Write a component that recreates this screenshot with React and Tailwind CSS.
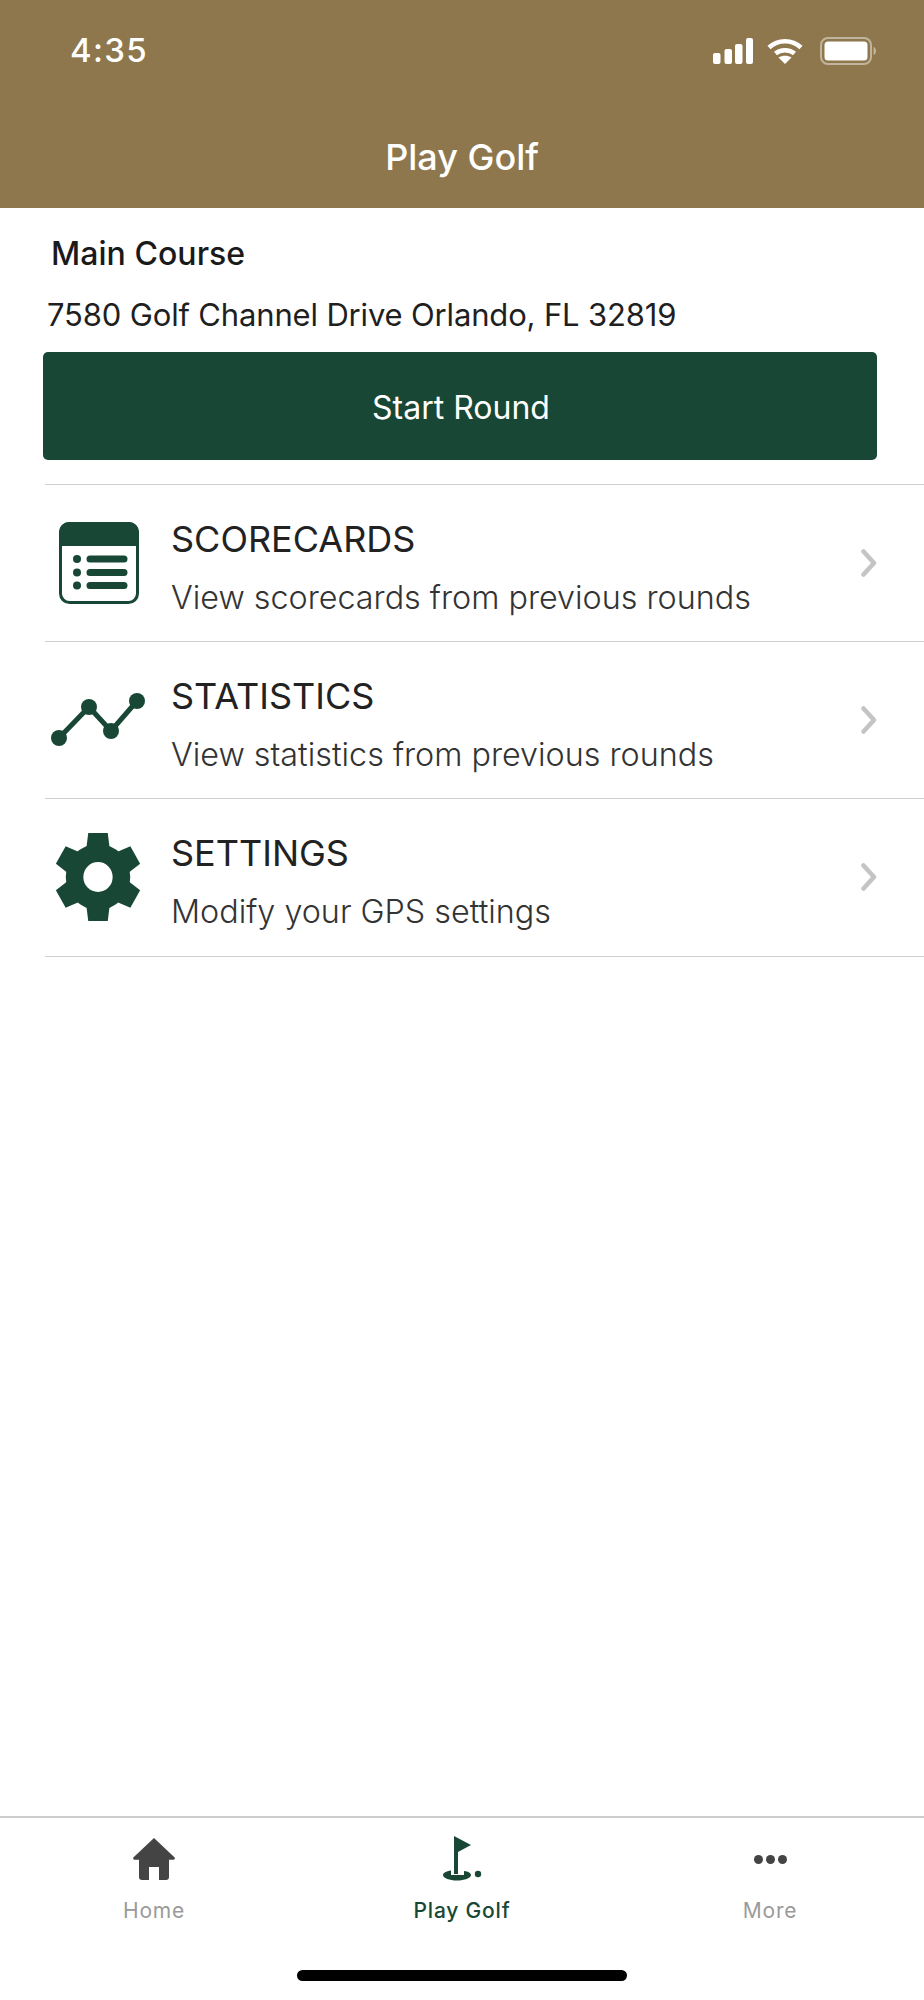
const GREEN = "#184835";

function ScorecardIcon() {
  return (
    <svg width="80" height="82" viewBox="0 0 80 82" fill="none">
      <rect x="1.5" y="1.5" width="77" height="79" rx="9" stroke={GREEN} strokeWidth="3" />
      <path d="M0 24V10a10 10 0 0 1 10-10h60a10 10 0 0 1 10 10v14z" fill={GREEN} />
      <circle cx="18" cy="37" r="4" fill={GREEN} />
      <circle cx="18" cy="50.5" r="4" fill={GREEN} />
      <circle cx="18" cy="63.5" r="4" fill={GREEN} />
      <path d="M31 37h34M31 50.5h34M31 63.5h34" stroke={GREEN} strokeWidth="7" strokeLinecap="round" />
    </svg>
  );
}

function ChartIcon() {
  return (
    <svg width="98" height="54" viewBox="0 0 98 54" fill="none">
      <path d="M9 45 39 14 61 38 87 8" stroke={GREEN} strokeWidth="5" />
      <circle cx="9" cy="45" r="8" fill={GREEN} />
      <circle cx="39" cy="14" r="8" fill={GREEN} />
      <circle cx="61" cy="38" r="8" fill={GREEN} />
      <circle cx="87" cy="8" r="8" fill={GREEN} />
    </svg>
  );
}

function GearIcon() {
  return (
    <svg width="86" height="88" viewBox="0 0 88 88" preserveAspectRatio="none" className="mr-[3px]">
      <circle cx="44" cy="44" r="33" fill={GREEN} />
      {[0, 60, 120, 180, 240, 300].map((deg) => (
        <polygon key={deg} points="34,0 54,0 56,16 32,16" fill={GREEN} transform={`rotate(${deg} 44 44)`} />
      ))}
      <circle cx="44" cy="44" r="15" fill="#fff" />
    </svg>
  );
}

function HomeIcon() {
  return (
    <svg width="42" height="42" viewBox="0 0 42 42" fill="#444">
      <path d="M21 0 41.400 19.200a1.500 1.500 0 0 1-1 2.600H36V39a3 3 0 0 1-3 3h-7V29H16v13H9a3 3 0 0 1-3-3V21.800H1.600a1.500 1.500 0 0 1-1-2.600z" />
    </svg>
  );
}

function FlagIcon() {
  return (
    <svg width="40" height="46" viewBox="0 0 40 46" fill={GREEN}>
      <path d="M12 0 29 9 16 16v22h-4z" />
      <path d="M9 34.500v4.500h13v-4.100c4.500.5 7 2 7 4.100 0 3-6.500 5.500-14 5.500S1 42 1 39c0-2 3-3.700 8-4.500z" />
      <circle cx="36" cy="38" r="3.200" />
    </svg>
  );
}

function SignalIcon() {
  return (
    <svg width="40" height="26" viewBox="0 0 40 26" fill="#fff">
      <rect x="0" y="15" width="7.500" height="11" rx="2" />
      <rect x="11.500" y="11" width="7.500" height="15" rx="2" />
      <rect x="22" y="6" width="7.500" height="20" rx="2" />
      <rect x="33" y="0" width="7" height="26" rx="2" />
    </svg>
  );
}

function WifiIcon() {
  return (
    <svg width="36" height="26" viewBox="0 0 36 26" fill="none">
      <path d="M2 9.500C11 1 25 1 34 9.500" stroke="#fff" strokeWidth="4.500" />
      <path d="M8.500 15.500C13.500 11 22.500 11 27.500 15.500" stroke="#fff" strokeWidth="4.500" />
      <path d="M11.500 19.500C15 17.200 21 17.200 24.500 19.500L18 26z" fill="#fff" />
    </svg>
  );
}

function BatteryIcon() {
  return (
    <svg width="56" height="28" viewBox="0 0 56 28" fill="none" className="ml-[3px]">
      <rect x="1" y="1" width="50" height="26" rx="7" stroke="#fff" strokeOpacity="0.45" strokeWidth="2" />
      <rect x="4.500" y="4.500" width="43" height="19" rx="3.500" fill="#fff" />
      <path d="M53.500 10c1.700.6 2.500 2.200 2.500 4s-.8 3.400-2.500 4z" fill="#fff" fillOpacity="0.45" />
    </svg>
  );
}

function Chevron() {
  return (
    <svg width="16" height="28" viewBox="0 0 16 28" fill="none">
      <path d="M2.500 2.500 13 14 2.500 25.500" stroke="#c4c4c4" strokeWidth="4.500" strokeLinecap="round" strokeLinejoin="round" />
    </svg>
  );
}

const rows = [
  { title: "SCORECARDS", sub: "View scorecards from previous rounds", icon: <ScorecardIcon /> },
  { title: "STATISTICS", sub: "View statistics from previous rounds", icon: <ChartIcon /> },
  { title: "SETTINGS", sub: "Modify your GPS settings", icon: <GearIcon /> },
];

function MenuRow({ title, sub, icon }) {
  return (
    <div className="flex h-[157.200px] items-center border-b border-[#cfcfcf] pr-[47px]">
      <div className="flex w-[108px] shrink-0 justify-center">{icon}</div>
      <div className="ml-[18px] flex-1">
        <p className="mt-[10px] text-[36px] leading-[40px] text-[#222]">{title}</p>
        <p className="mt-[19px] text-[32.300px] leading-[40px] font-light text-[#333]">{sub}</p>
      </div>
      <Chevron />
    </div>
  );
}

function TabItem({ label, active, icon }) {
  return (
    <div className="flex flex-1 flex-col items-center">
      <div className="flex h-[46px] items-center justify-center">{icon}</div>
      <span
        className={`mt-[16px] text-[21px] leading-[26px] tracking-[0.8px] ${
          active ? "font-medium text-[#184835]" : "text-[#9a9a9a]"
        }`}
      >
        {label}
      </span>
    </div>
  );
}

export default function App() {
  return (
    <div className="flex h-[2000px] w-[924px] flex-col bg-white font-['Inter',sans-serif]">
      {/* header */}
      <div className="h-[208px] bg-[#8e774c] text-white">
        <div className="flex h-[101px] items-center justify-between pr-[48px] pl-[70px]">
          <span className="text-[33px] font-medium tracking-[1.3px]">4:35</span>
          <div className="flex items-center gap-[14px]">
            <SignalIcon />
            <WifiIcon />
            <BatteryIcon />
          </div>
        </div>
        <h1 className="mt-[34px] text-center text-[36px] leading-[44px] font-medium">Play Golf</h1>
      </div>

      <div className="flex-1">
        <p className="mt-[28px] ml-[51px] text-[32px] leading-[36px] font-medium tracking-[0.05px] text-[#1a1a1a]">
          Main Course
        </p>
        <p className="mt-[24px] ml-[47px] text-[31px] leading-[38px] tracking-[-0.16px] text-[#1f1f1f]">
          7580 Golf Channel Drive Orlando, FL 32819
        </p>
        <button className="mx-[43px] mt-[18px] flex h-[108px] w-[834px] items-center justify-center rounded-[5px] bg-[#184835] pt-[3px] pl-[2px] text-[32px] text-white">
          Start Round
        </button>
        <div className="mt-[24px] ml-[45px] border-t border-[#cfcfcf]">
          {rows.map((row) => (
            <MenuRow key={row.title} {...row} />
          ))}
        </div>
      </div>

      {/* tab bar */}
      <div className="h-[184px] border-t-2 border-[#cdcdcd] pt-[18px]">
        <div className="flex">
          <TabItem label="Home" icon={<HomeIcon />} />
          <TabItem label="Play Golf" active icon={<FlagIcon />} />
          <TabItem
            label="More"
            icon={
              <div className="flex gap-[3px]">
                <span className="h-[9px] w-[9px] rounded-full bg-[#444]" />
                <span className="h-[9px] w-[9px] rounded-full bg-[#444]" />
                <span className="h-[9px] w-[9px] rounded-full bg-[#444]" />
              </div>
            }
          />
        </div>
        <div className="mx-auto mt-[46px] h-[11px] w-[330px] rounded-full bg-black" />
      </div>
    </div>
  );
}
